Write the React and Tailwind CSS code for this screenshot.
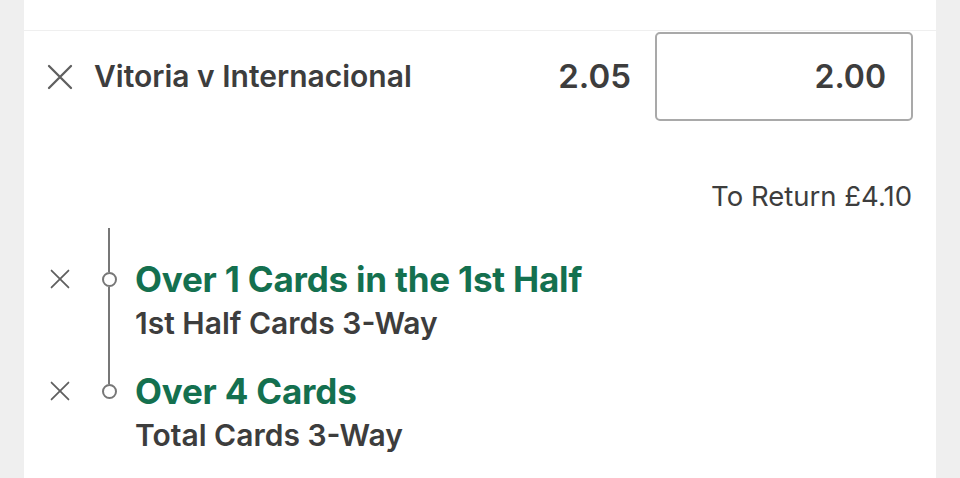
import React from "react";

const legs = [
  { id: 1, title: "Over 1 Cards in the 1st Half", market: "1st Half Cards 3-Way" },
  { id: 2, title: "Over 4 Cards", market: "Total Cards 3-Way" },
];

function CloseIcon({ size = 26 }) {
  return (
    <svg width={size} height={size} viewBox="0 0 26 26" fill="none">
      <path d="M2 2L24 24M24 2L2 24" stroke="#5f5f5f" strokeWidth="2.3" strokeLinecap="round" />
    </svg>
  );
}

function Leg({ leg, last }) {
  return (
    <div className="flex">
      {/* remove button */}
      <div className="w-[72px] shrink-0 flex justify-center pt-[41px]">
        <CloseIcon size={20} />
      </div>
      {/* timeline: line, node, line */}
      <div className="w-[26px] shrink-0 flex flex-col items-center">
        <div className="w-[2px] h-[44px] bg-[#777]" />
        <div className="w-[15px] h-[15px] rounded-full border-2 border-[#777] bg-white" />
        {!last && <div className="w-[2px] flex-1 bg-[#777]" />}
      </div>
      <div className="pl-[13px] pt-[31px]">
        <div className="text-[35px] leading-[40px] font-bold text-[#14704f] tracking-[-0.2px]">
          {leg.title}
        </div>
        <div className="mt-[7px] text-[30px] leading-[34px] font-semibold text-[#3d3d3d]">
          {leg.market}
        </div>
      </div>
    </div>
  );
}

export default function App() {
  return (
    <div
      className="h-[478px] overflow-hidden bg-[#efefef] px-6"
      style={{ fontFamily: "Inter, 'Noto Sans', sans-serif" }}
    >
      <div className="h-full bg-white flex flex-col">
        <div className="h-[31px] border-b border-[#efefef]" />

        {/* selection row */}
        <div className="flex items-center pl-[23px] pr-[23px] pt-[1px]">
          <CloseIcon />
          <div className="ml-[21px] flex-1 text-[30px] font-semibold text-[#3d3d3d]">
            Vitoria v Internacional
          </div>
          <div className="text-[33px] font-semibold text-[#3d3d3d]">2.05</div>
          <div className="ml-[24px] w-[258px] h-[89px] rounded-[5px] border-2 border-[#a9a9a9] flex items-center justify-end pr-[25px]">
            <span className="text-[32px] font-semibold text-[#3d3d3d]">2.00</span>
          </div>
        </div>

        <div className="flex justify-end pr-[24px] mt-[60px] text-[27.5px] leading-[30px] text-[#3d3d3d]">
          To Return £4.10
        </div>

        <div className="mt-[17px]">
          {legs.map((leg, i) => (
            <Leg key={leg.id} leg={leg} last={i === legs.length - 1} />
          ))}
        </div>
      </div>
    </div>
  );
}
